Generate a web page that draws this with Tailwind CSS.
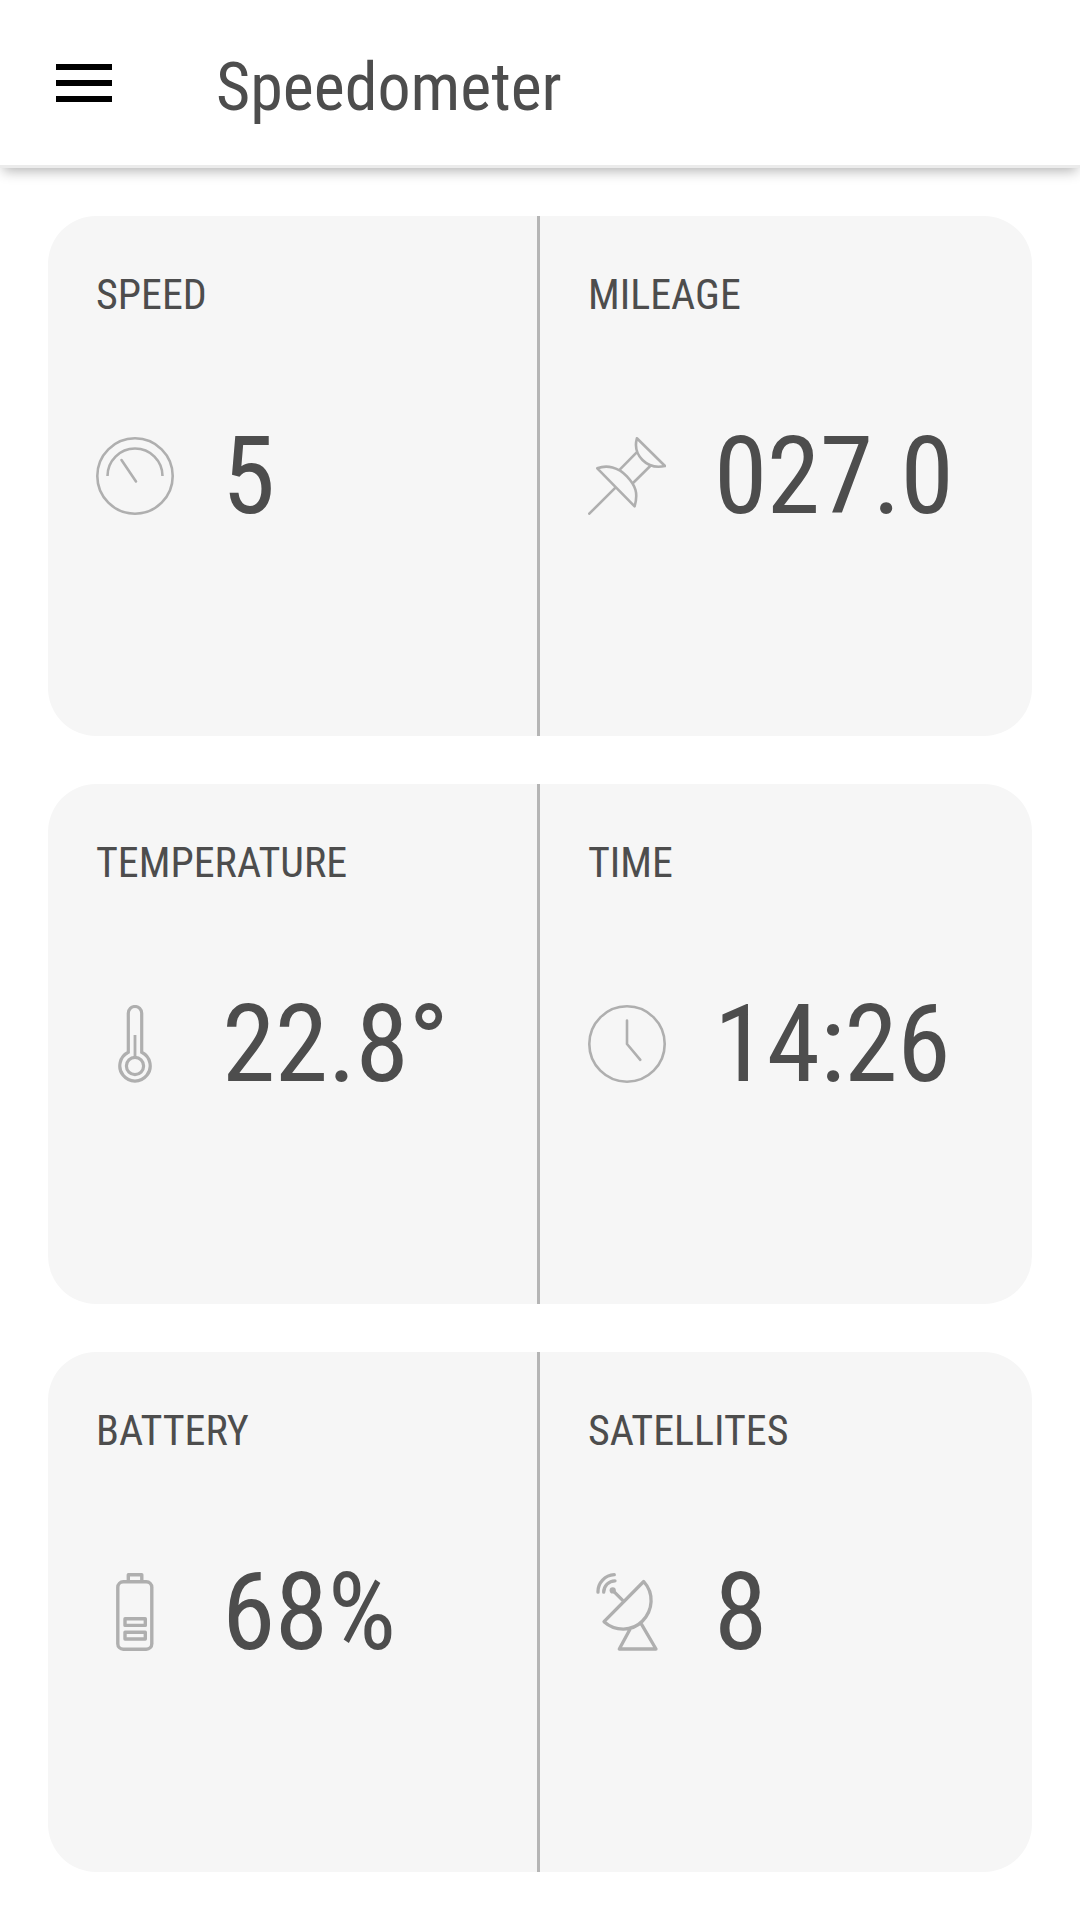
<!DOCTYPE html>
<html lang="en">
<head>
<meta charset="utf-8">
<title>Speedometer</title>
<script src="https://cdn.jsdelivr.net/npm/@tailwindcss/browser@4"></script>
</head>
<body class="h-[1920px] w-[1080px] overflow-hidden bg-white font-['Roboto_Condensed','Roboto',sans-serif] text-[#4d4d4d] [font-stretch:75%]">
  <header class="flex h-[168px] items-center border-b-[3px] border-[#ebebeb] bg-white pl-14 shadow-[0_6px_12px_-3px_rgba(0,0,0,0.3)]">
    <svg class="h-[38px] w-14" viewBox="0 0 56 38"><path d="M0 0h56v6H0zM0 16h56v6H0zM0 32h56v6H0z"/></svg>
    <h1 class="ml-[104px] pt-[11px] text-[66px] leading-none">Speedometer</h1>
  </header>
  <main class="flex flex-col gap-12 px-12 pt-12">
    <section class="grid h-[520px] grid-cols-2 overflow-hidden rounded-[48px] bg-[#f6f6f6]">
      <div class="border-r-[3px] border-[#b5b5b5] px-12 pt-[54px]">
        <h2 class="text-[42px] leading-[49px]">SPEED</h2>
        <div class="mt-[118px] flex h-[78px] items-center gap-12">
          <svg class="size-[78px] shrink-0" viewBox="0 0 78 78" fill="none" stroke="#afafaf" stroke-width="2.6" stroke-linecap="round"><circle cx="39" cy="39" r="37.7"/><path stroke-linecap="butt" d="M11.5 39a27.5 27.5 0 0 1 55 0"/><path d="M25.5 23 40 44.4"/></svg>
          <span class="text-[108px] leading-[126px] tracking-[-0.5px]">5</span>
        </div>
      </div>
      <div class="px-12 pt-[54px]">
        <h2 class="text-[42px] leading-[49px]">MILEAGE</h2>
        <div class="mt-[118px] flex h-[78px] items-center gap-12">
          <svg class="size-[78px] shrink-0" viewBox="0 0 78 78" fill="none" stroke="#afafaf" stroke-width="2.6" stroke-linecap="round" stroke-linejoin="round"><path d="M1.3 76.7 27.7 50.3M9.3 31.3 46.6 69.3C50.5 56 47.5 48.5 38.9 39.3S19 27.5 9.3 31.3zM32 32.3l16.7-17M45.3 45.7 62 29.3M48.9 1.3 77 29C68 31 61 29.5 54.5 23S46.8 9 48.9 1.3z"/></svg>
          <span class="text-[108px] leading-[126px] tracking-[-0.5px]">027.0</span>
        </div>
      </div>
    </section>
    <section class="grid h-[520px] grid-cols-2 overflow-hidden rounded-[48px] bg-[#f6f6f6]">
      <div class="border-r-[3px] border-[#b5b5b5] px-12 pt-[54px]">
        <h2 class="text-[42px] leading-[49px]">TEMPERATURE</h2>
        <div class="mt-[118px] flex h-[78px] items-center gap-12">
          <svg class="size-[78px] shrink-0" viewBox="0 0 78 78" fill="none" stroke="#afafaf" stroke-width="3.2"><path d="M32.3 47.2V8.2a6.7 6.7 0 0 1 13.4 0v39a15.2 15.2 0 1 1-13.4 0z"/><circle cx="39" cy="61" r="8.6"/><path stroke-width="2.8" d="M39 30v22"/></svg>
          <span class="text-[108px] leading-[126px] tracking-[-0.5px]">22.8°</span>
        </div>
      </div>
      <div class="px-12 pt-[54px]">
        <h2 class="text-[42px] leading-[49px]">TIME</h2>
        <div class="mt-[118px] flex h-[78px] items-center gap-12">
          <svg class="size-[78px] shrink-0" viewBox="0 0 78 78" fill="none" stroke="#afafaf" stroke-width="2.6" stroke-linecap="round" stroke-linejoin="round"><circle cx="39" cy="39" r="37.7"/><path d="M39 15.5V39l13.3 15.8"/></svg>
          <span class="text-[108px] leading-[126px] tracking-[-0.5px]">14:26</span>
        </div>
      </div>
    </section>
    <section class="grid h-[520px] grid-cols-2 overflow-hidden rounded-[48px] bg-[#f6f6f6]">
      <div class="border-r-[3px] border-[#b5b5b5] px-12 pt-[54px]">
        <h2 class="text-[42px] leading-[49px]">BATTERY</h2>
        <div class="mt-[118px] flex h-[78px] items-center gap-12">
          <svg class="size-[78px] shrink-0" viewBox="0 0 78 78" fill="none" stroke="#afafaf" stroke-width="3.4" stroke-linejoin="round"><rect x="21.8" y="8.8" width="34" height="67.4" rx="5.5"/><path d="M32.3 8.8V1.7h13.5v7.1M29 45.7h20.3v6.7H29zM29 59.3h20.3V66H29z"/></svg>
          <span class="text-[108px] leading-[126px] tracking-[-0.5px]">68%</span>
        </div>
      </div>
      <div class="px-12 pt-[54px]">
        <h2 class="text-[42px] leading-[49px]">SATELLITES</h2>
        <div class="mt-[118px] flex h-[78px] items-center gap-12">
          <svg class="size-[78px] shrink-0" viewBox="0 0 78 78" fill="none" stroke="#afafaf" stroke-width="3.3" stroke-linecap="round" stroke-linejoin="round"><path d="M55.7 8.5 16 48.7C27 58.5 44 58.8 54.5 48S66.500 20.500 55.7 8.500zM35.7 28.3l-11-11M42 56.3 31.3 76H68L53 50.3"/><circle cx="24.7" cy="17.4" r="3.1" fill="#afafaf" stroke="none"/><path d="M15.7 19.2A11.5 11.5 0 0 1 27 7.8M10 19.2A17 17 0 0 1 26.3 1.7"/></svg>
          <span class="text-[108px] leading-[126px] tracking-[-0.5px]">8</span>
        </div>
      </div>
    </section>
  </main>
</body>
</html>
